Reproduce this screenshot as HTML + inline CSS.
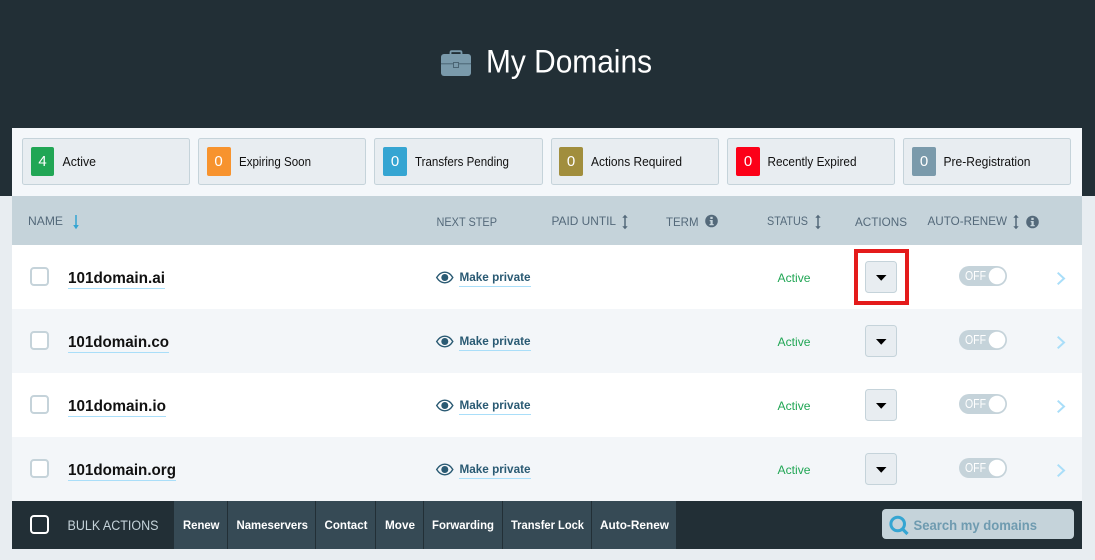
<!DOCTYPE html>
<html lang="en">
<head>
<meta charset="utf-8">
<title>My Domains</title>
<style>
html,body{margin:0;padding:0;width:1095px;height:560px;overflow:hidden;background:#e8edf1}
svg{display:block}
text{font-family:"Liberation Sans",sans-serif}
.st{fill:#111;font-size:12.5px}
.n{fill:#fff;font-size:15px;text-anchor:middle}
.h{fill:#54697a;font-size:12px}
.d{fill:#111;font-size:16px;font-weight:bold}
.m{fill:#2a5a73;font-size:12px;font-weight:bold}
.a{fill:#21a655;font-size:12px}
.o{fill:#fff;font-size:12.5px}
.b{fill:#fff;font-size:12px;font-weight:bold}
</style>
</head>
<body>
<svg width="1095" height="560" viewBox="0 0 1095 560" xmlns="http://www.w3.org/2000/svg">
<defs>
  <g id="eye"><path d="M436.700 277.500C439 273.800 442 272.200 444.800 272.200s5.800 1.600 8 5.300C450.600 281.200 447.600 282.800 444.800 282.800s-5.800-1.600-8.100-5.300z" fill="none" stroke="#2a5a73" stroke-width="1.400"/><circle cx="444.800" cy="277.500" r="3.500" fill="#2a5a73"/></g>
  <g id="sort"><path d="M0 -5V5" stroke="#54697a" stroke-width="1.500" fill="none"/><path d="M-2.700 -4.200L0 -7.200L2.700 -4.200zM-2.700 4.200L0 7.200L2.700 4.200z" fill="#54697a"/></g>
  <g id="info"><circle r="6.300" fill="#54697a"/><rect x="-1.200" y="-4.200" width="2.400" height="2.200" fill="#c5d3da"/><path d="M-1.800 -1H1.200V3H2.200V4.300H-2V3H-1V0.200H-1.800z" fill="#c5d3da"/></g>
  <g id="caret"><path d="M876 275H886.500L881.200 280.700z" fill="#000"/></g>
  <g id="tog"><rect x="959" y="266" width="48" height="20" rx="10" fill="#c5d3da"/><circle cx="997" cy="276" r="8.300" fill="#fff"/></g>
  <g id="chev"><path d="M1057.700 272.700L1064 278.500L1057.700 284.300" fill="none" stroke="#a9def9" stroke-width="2"/></g>
  <g id="btn"><rect x="865.500" y="261.500" width="31" height="31" rx="3" fill="#e8edf1" stroke="#c5d3da"/></g>
  <g id="cb"><rect x="31" y="268" width="17" height="17" rx="3" fill="#fff" stroke="#c5d3da" stroke-width="2"/></g>
</defs>

<rect width="1095" height="560" fill="#e8edf1"/>
<rect width="1095" height="196" fill="#222f36"/>
<rect x="12" y="128" width="1070" height="68" fill="#f4f7fa"/>

<!-- title -->
<path d="M450.500 54V52.500C450.500 51.600 451 51.200 451.800 51.200H460.200C461 51.200 461.500 51.600 461.500 52.500V54" fill="none" stroke="#7a9aab" stroke-width="1.800"/>
<rect x="441" y="54" width="30" height="22" rx="3" fill="#7a9aab"/>
<rect x="441" y="63.300" width="30" height="1" fill="#4a6473"/>
<rect x="453.500" y="62.500" width="5" height="5" fill="#7a9aab" stroke="#4a6473" stroke-width="1"/>
<text x="486" y="72.500" font-size="32" fill="#fff" textLength="166" lengthAdjust="spacingAndGlyphs">My Domains</text>

<!-- stat boxes -->
<g fill="#e8edf1" stroke="#c5d3da">
<rect x="22.500" y="138.500" width="167" height="46" rx="2"/>
<rect x="198.500" y="138.500" width="167" height="46" rx="2"/>
<rect x="374.500" y="138.500" width="168" height="46" rx="2"/>
<rect x="551.500" y="138.500" width="167" height="46" rx="2"/>
<rect x="727.500" y="138.500" width="167" height="46" rx="2"/>
<rect x="903.500" y="138.500" width="167" height="46" rx="2"/>
</g>
<rect x="31" y="147" width="23" height="29" rx="2" fill="#21a655"/>
<rect x="207" y="147" width="24" height="29" rx="2" fill="#f7932e"/>
<rect x="383" y="147" width="24" height="29" rx="2" fill="#35a5d2"/>
<rect x="559" y="147" width="24" height="29" rx="2" fill="#a18e3d"/>
<rect x="736" y="147" width="24" height="29" rx="2" fill="#fc0018"/>
<rect x="912" y="147" width="24" height="29" rx="2" fill="#7a9aab"/>
<text class="n" x="42.500" y="166">4</text>
<text class="n" x="218.500" y="166">0</text>
<text class="n" x="395" y="166">0</text>
<text class="n" x="571" y="166">0</text>
<text class="n" x="748" y="166">0</text>
<text class="n" x="924" y="166">0</text>
<text class="st" x="62.500" y="166" textLength="33.500" lengthAdjust="spacingAndGlyphs">Active</text>
<text class="st" x="239" y="166" textLength="72" lengthAdjust="spacingAndGlyphs">Expiring Soon</text>
<text class="st" x="415" y="166" textLength="94" lengthAdjust="spacingAndGlyphs">Transfers Pending</text>
<text class="st" x="591" y="166" textLength="91" lengthAdjust="spacingAndGlyphs">Actions Required</text>
<text class="st" x="767.500" y="166" textLength="89" lengthAdjust="spacingAndGlyphs">Recently Expired</text>
<text class="st" x="943.500" y="166" textLength="87" lengthAdjust="spacingAndGlyphs">Pre-Registration</text>

<!-- table header -->
<rect x="12" y="196" width="1070" height="49" fill="#c5d3da"/>
<text class="h" x="28" y="225" textLength="35" lengthAdjust="spacingAndGlyphs">NAME</text>
<path d="M76 215V226" stroke="#35a5d2" stroke-width="1.500" fill="none"/>
<path d="M73.200 225L76 229.200L78.800 225z" fill="#35a5d2"/>
<text class="h" x="436.500" y="226" textLength="60.500" lengthAdjust="spacingAndGlyphs">NEXT STEP</text>
<text class="h" x="551.500" y="225" textLength="64.500" lengthAdjust="spacingAndGlyphs">PAID UNTIL</text>
<use href="#sort" x="625" y="222"/>
<text class="h" x="666" y="226" textLength="32.500" lengthAdjust="spacingAndGlyphs">TERM</text>
<use href="#info" x="711.500" y="221"/>
<text class="h" x="767" y="225" textLength="41" lengthAdjust="spacingAndGlyphs">STATUS</text>
<use href="#sort" x="818" y="222"/>
<text class="h" x="855" y="226" textLength="52" lengthAdjust="spacingAndGlyphs">ACTIONS</text>
<text class="h" x="927.500" y="225" textLength="79.500" lengthAdjust="spacingAndGlyphs">AUTO-RENEW</text>
<use href="#sort" x="1016" y="222"/>
<use href="#info" x="1032.500" y="222"/>

<!-- rows -->
<rect x="12" y="245" width="1070" height="64" fill="#fff"/>
<rect x="12" y="309" width="1070" height="64" fill="#f3f6f9"/>
<rect x="12" y="373" width="1070" height="64" fill="#fff"/>
<rect x="12" y="437" width="1070" height="64" fill="#f3f6f9"/>

<!-- row 1 -->
<use href="#cb"/>
<text class="d" x="68" y="283" textLength="97" lengthAdjust="spacingAndGlyphs">101domain.ai</text>
<rect x="68" y="288" width="97" height="1" fill="#a9def9"/>
<use href="#eye"/>
<text class="m" x="459.500" y="281" textLength="71" lengthAdjust="spacingAndGlyphs">Make private</text>
<rect x="459" y="286" width="72" height="1" fill="#a9def9"/>
<text class="a" x="777.500" y="282" textLength="33" lengthAdjust="spacingAndGlyphs">Active</text>
<rect x="856" y="251" width="51" height="52" fill="none" stroke="#e41b1b" stroke-width="4"/>
<use href="#btn"/><use href="#caret"/>
<use href="#tog"/>
<text class="o" x="965" y="280" textLength="21" lengthAdjust="spacingAndGlyphs">OFF</text>
<use href="#chev"/>

<!-- row 2 -->
<g transform="translate(0,64)">
<use href="#cb"/>
<text class="d" x="68" y="283" textLength="101" lengthAdjust="spacingAndGlyphs">101domain.co</text>
<rect x="68" y="288" width="101" height="1" fill="#a9def9"/>
<use href="#eye"/>
<text class="m" x="459.500" y="281" textLength="71" lengthAdjust="spacingAndGlyphs">Make private</text>
<rect x="459" y="286" width="72" height="1" fill="#a9def9"/>
<text class="a" x="777.500" y="282" textLength="33" lengthAdjust="spacingAndGlyphs">Active</text>
<use href="#btn"/><use href="#caret"/>
<use href="#tog"/>
<text class="o" x="965" y="280" textLength="21" lengthAdjust="spacingAndGlyphs">OFF</text>
<use href="#chev"/>
</g>

<!-- row 3 -->
<g transform="translate(0,128)">
<use href="#cb"/>
<text class="d" x="68" y="283" textLength="98" lengthAdjust="spacingAndGlyphs">101domain.io</text>
<rect x="68" y="288" width="98" height="1" fill="#a9def9"/>
<use href="#eye"/>
<text class="m" x="459.500" y="281" textLength="71" lengthAdjust="spacingAndGlyphs">Make private</text>
<rect x="459" y="286" width="72" height="1" fill="#a9def9"/>
<text class="a" x="777.500" y="282" textLength="33" lengthAdjust="spacingAndGlyphs">Active</text>
<use href="#btn"/><use href="#caret"/>
<use href="#tog"/>
<text class="o" x="965" y="280" textLength="21" lengthAdjust="spacingAndGlyphs">OFF</text>
<use href="#chev"/>
</g>

<!-- row 4 -->
<g transform="translate(0,192)">
<use href="#cb"/>
<text class="d" x="68" y="283" textLength="108" lengthAdjust="spacingAndGlyphs">101domain.org</text>
<rect x="68" y="288" width="108" height="1" fill="#a9def9"/>
<use href="#eye"/>
<text class="m" x="459.500" y="281" textLength="71" lengthAdjust="spacingAndGlyphs">Make private</text>
<rect x="459" y="286" width="72" height="1" fill="#a9def9"/>
<text class="a" x="777.500" y="282" textLength="33" lengthAdjust="spacingAndGlyphs">Active</text>
<use href="#btn"/><use href="#caret"/>
<use href="#tog"/>
<text class="o" x="965" y="280" textLength="21" lengthAdjust="spacingAndGlyphs">OFF</text>
<use href="#chev"/>
</g>

<!-- bulk bar -->
<rect x="12" y="501" width="1070" height="48" fill="#222f36"/>
<rect x="31" y="516" width="17" height="17" rx="3" fill="none" stroke="#fff" stroke-width="2"/>
<text x="67.500" y="530" font-size="13.500" fill="#c5d3da" textLength="91" lengthAdjust="spacingAndGlyphs">BULK ACTIONS</text>
<rect x="174" y="501" width="502" height="48" fill="#364a55"/>
<g fill="#222f36">
<rect x="227" y="501" width="1" height="48"/>
<rect x="315" y="501" width="1" height="48"/>
<rect x="375" y="501" width="1" height="48"/>
<rect x="423" y="501" width="1" height="48"/>
<rect x="502" y="501" width="1" height="48"/>
<rect x="591" y="501" width="1" height="48"/>
</g>
<text class="b" x="183" y="529" textLength="36.500" lengthAdjust="spacingAndGlyphs">Renew</text>
<text class="b" x="236.500" y="529" textLength="71.500" lengthAdjust="spacingAndGlyphs">Nameservers</text>
<text class="b" x="324.500" y="529" textLength="43" lengthAdjust="spacingAndGlyphs">Contact</text>
<text class="b" x="385" y="529" textLength="30" lengthAdjust="spacingAndGlyphs">Move</text>
<text class="b" x="432" y="529" textLength="62" lengthAdjust="spacingAndGlyphs">Forwarding</text>
<text class="b" x="511" y="529" textLength="73" lengthAdjust="spacingAndGlyphs">Transfer Lock</text>
<text class="b" x="600" y="529" textLength="69" lengthAdjust="spacingAndGlyphs">Auto-Renew</text>

<!-- search -->
<rect x="882" y="509" width="192" height="30" rx="4" fill="#c5d3da"/>
<circle cx="897.700" cy="524" r="6.800" fill="none" stroke="#35a5d2" stroke-width="3"/>
<path d="M902.500 529L907.500 534" stroke="#35a5d2" stroke-width="3.200" fill="none"/>
<text x="913.500" y="530" font-size="13.500" font-weight="bold" fill="#6f9bb0" textLength="123.500" lengthAdjust="spacingAndGlyphs">Search my domains</text>
</svg>
</body>
</html>
